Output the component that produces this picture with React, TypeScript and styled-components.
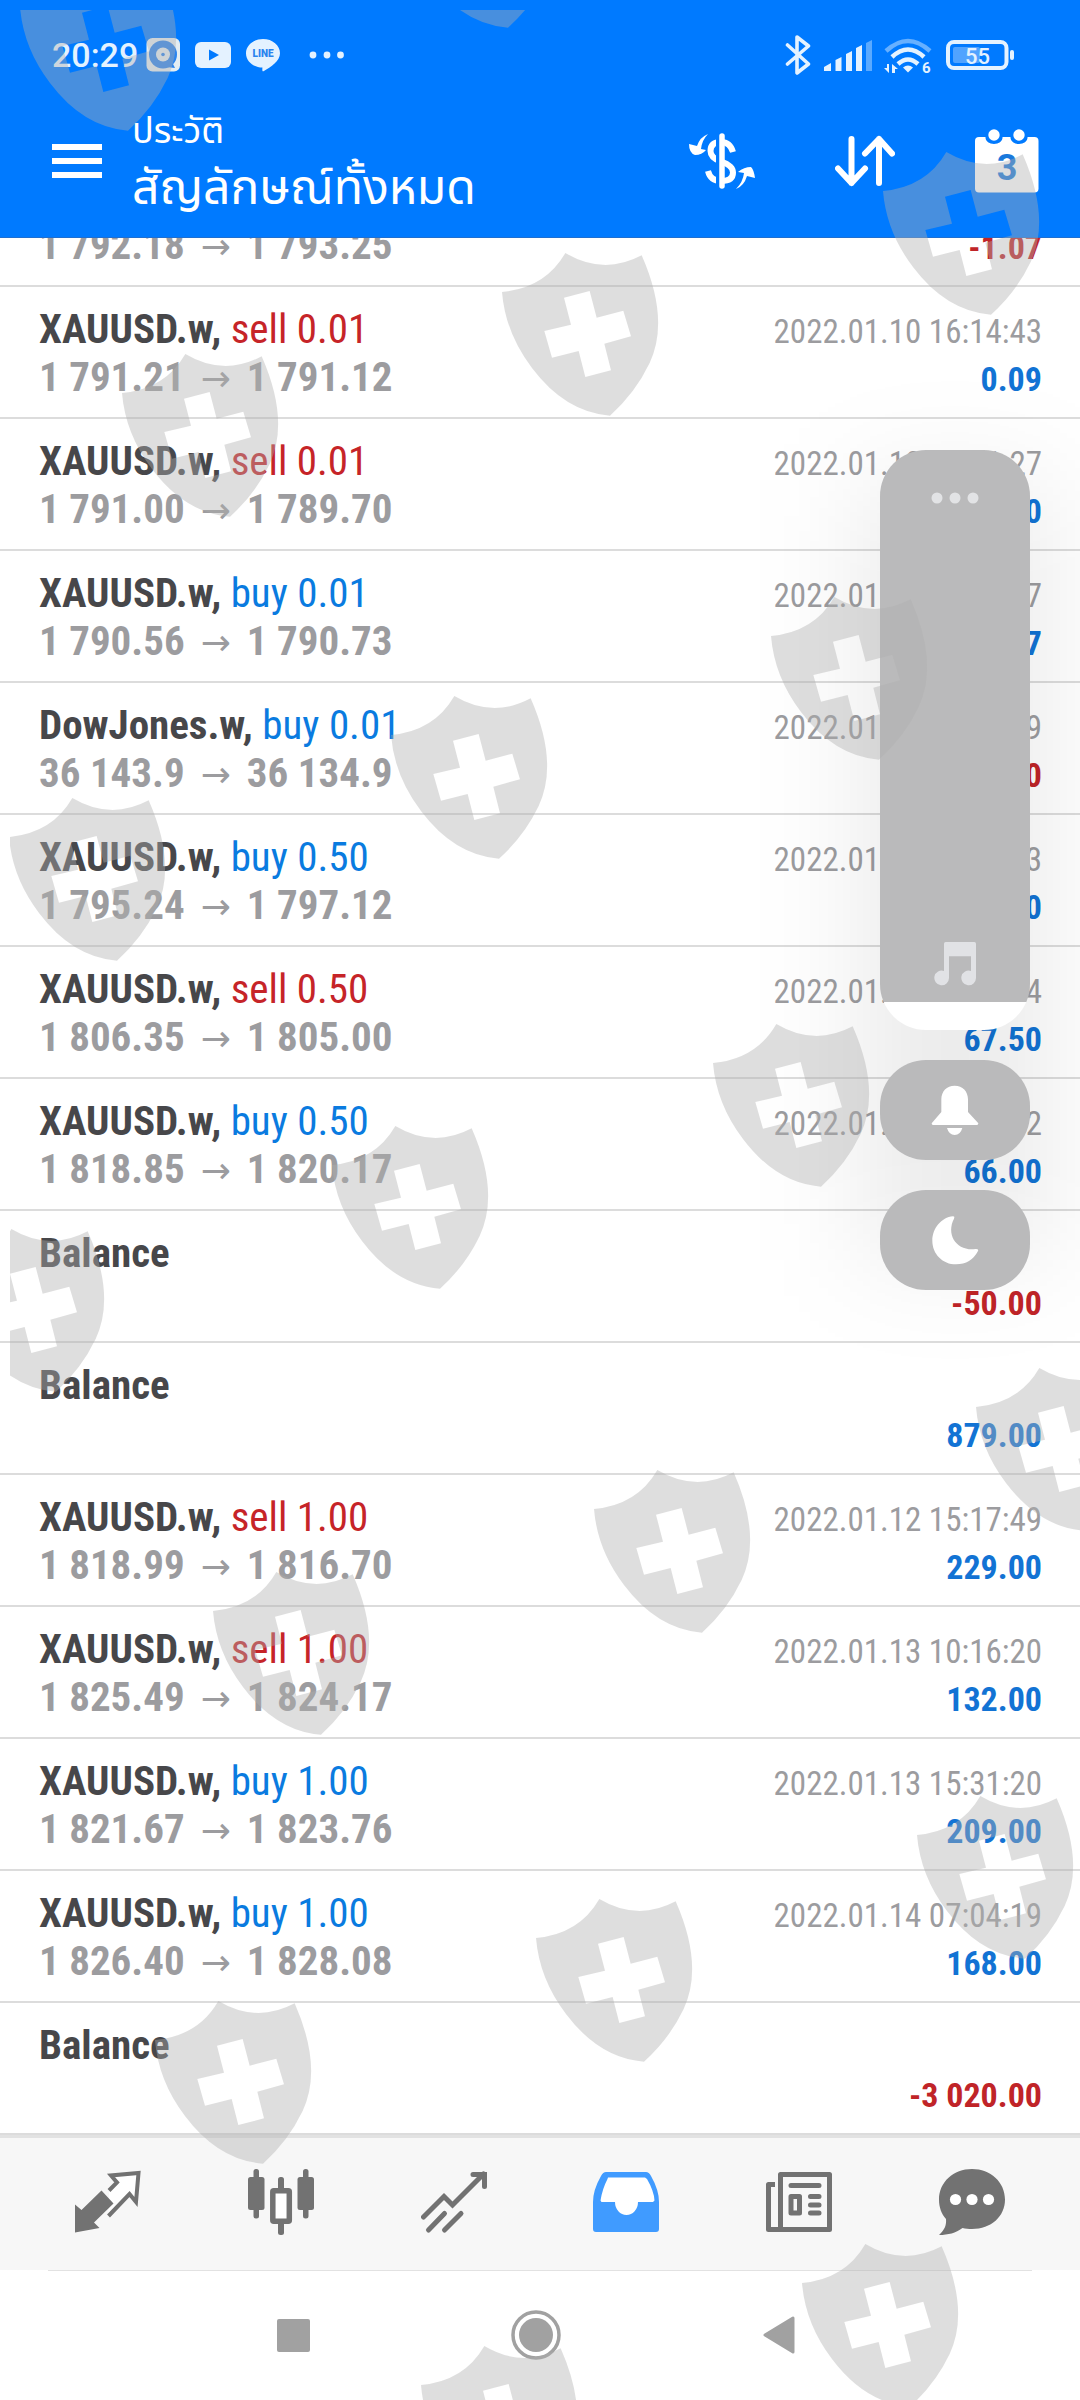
import React from "react";
import styled, { createGlobalStyle } from "styled-components";

const GlobalStyle = createGlobalStyle`
  * { box-sizing: border-box; }
  body { margin: 0; background: #fff; }
  button { border: 0; background: none; padding: 0; cursor: pointer; font: inherit; color: inherit; }
`;

const condensed = `"Roboto Condensed", Roboto, sans-serif`;

const Screen = styled.div`
  position: relative;
  display: flex;
  flex-direction: column;
  height: 100vh;
  overflow: hidden;
  background: #fff;
  font-family: ${condensed};
`;

const Header = styled.header`
  flex: none;
  background: #007aff;
  color: #fff;
  border-bottom: 1px solid #1f6fd0;
`;

const StatusBar = styled.div`
  display: flex;
  align-items: center;
  justify-content: space-between;
  height: 80px;
  padding: 30px 66px 0 52px;
`;

const StatusGroup = styled.div`
  display: flex;
  align-items: center;
  gap: 8px;
`;

const Clock = styled.time`
  font: 500 34px/40px Roboto, sans-serif;
  color: #e4f2ff;
`;

const Toolbar = styled.div`
  display: flex;
  align-items: center;
  height: 157px;
  padding: 4px 41px 0 52px;
`;

const Titles = styled.div`
  flex: 1;
  margin-left: 30px;
  font-family: "Noto Sans Thai", "Noto Sans", "Open Sans", sans-serif;
`;

const Caption = styled.div`
  font-size: 36px;
  line-height: 58px;
`;

const Heading = styled.h1`
  margin: 0;
  font-size: 48px;
  font-weight: 400;
  line-height: 58px;
`;

const Actions = styled.div`
  display: flex;
  align-items: center;
  gap: 80px;
`;

const IconButton = styled.button`
  display: flex;
  align-items: center;
  justify-content: center;
`;

const History = styled.ul`
  flex: 1;
  min-height: 0;
  margin: 0;
  padding: 0;
  list-style: none;
  overflow: hidden;
  display: flex;
  flex-direction: column;
  justify-content: flex-end;
`;

const Row = styled.li`
  flex: none;
  height: 132px;
  padding: 18px 38px 0 39px;
  border-bottom: 2px solid #dcdcdc;
`;

const Line = styled.div`
  display: flex;
  align-items: baseline;
  height: 48px;
  font-size: 41px;
  line-height: 48px;
  white-space: pre;
  &::before { content: "\\200b"; }
`;

const Symbol = styled.span`
  font-weight: 700;
  color: #47474a;
`;

const Side = styled.span<{ $kind: "buy" | "sell" }>`
  color: ${(p) => (p.$kind === "buy" ? "#0a7be0" : "#c62428")};
`;

const Prices = styled.span`
  font-weight: 700;
  color: #9c9c9f;
`;

const Arrow = styled.span`
  margin: 0 16px;
  font-family: "DejaVu Sans", sans-serif;
  font-size: 36px;
  font-weight: 400;
`;

const When = styled.time`
  margin-left: auto;
  font-size: 33px;
  color: #9c9c9f;
`;

const Profit = styled.span<{ $loss: boolean }>`
  margin-left: auto;
  font-size: 34px;
  font-weight: 700;
  color: ${(p) => (p.$loss ? "#c02428" : "#1273d4")};
`;

const TabBar = styled.nav`
  flex: none;
  display: flex;
  height: 135px;
  padding: 0 22px 4px;
  background: #f7f7f7;
  border-top: 3px solid #e2e2e2;
`;

const Tab = styled.button<{ $active?: boolean }>`
  flex: 1;
  display: flex;
  align-items: center;
  justify-content: center;
  color: ${(p) => (p.$active ? "#409bff" : "#727272")};
`;

const SystemNav = styled.nav`
  flex: none;
  display: flex;
  height: 130px;
  padding: 0 180px 0 172px;
  color: #a1a1a1;
  background: linear-gradient(#e2e2e2, #e2e2e2) 48px 0 / calc(100% - 96px) 1px no-repeat;
`;

const NavButton = styled.button`
  flex: 1;
  display: flex;
  align-items: center;
  justify-content: center;
`;

const VolumeOverlay = styled.aside`
  position: absolute;
  z-index: 0;
  top: 450px;
  right: 50px;
  width: 150px;
  display: flex;
  flex-direction: column;
  gap: 30px;
  &::before {
    content: "";
    position: absolute;
    z-index: -1;
    inset: 30px -20px;
    background: rgba(0, 0, 0, 0.08);
    filter: blur(55px);
  }
`;

const VolumePanel = styled.div`
  display: flex;
  flex-direction: column;
  align-items: center;
  justify-content: space-between;
  height: 580px;
  padding: 42px 0 44px;
  border-radius: 46px;
  background: linear-gradient(#bababb 552px, #fff 552px);
`;

const OverlayButton = styled.button`
  display: flex;
  align-items: center;
  justify-content: center;
  height: 100px;
  border-radius: 46px;
  background: #bababb;
`;

const Watermark = styled.svg`
  position: absolute;
  z-index: 1;
  top: 10px;
  left: 10px;
  pointer-events: none;
`;

type Trade = {
  symbol: string;
  side?: "buy" | "sell";
  lots?: string;
  open?: string;
  close?: string;
  time?: string;
  profit: string;
};

const gold = "XAUUSD.w";

const trades: Trade[] = [
  { symbol: gold, side: "sell", lots: "0.01", open: "1 792.18", close: "1 793.25", time: "2022.01.10 16:10:05", profit: "-1.07" },
  { symbol: gold, side: "sell", lots: "0.01", open: "1 791.21", close: "1 791.12", time: "2022.01.10 16:14:43", profit: "0.09" },
  { symbol: gold, side: "sell", lots: "0.01", open: "1 791.00", close: "1 789.70", time: "2022.01.10 16:21:27", profit: "1.30" },
  { symbol: gold, side: "buy", lots: "0.01", open: "1 790.56", close: "1 790.73", time: "2022.01.10 16:28:17", profit: "0.17" },
  { symbol: "DowJones.w", side: "buy", lots: "0.01", open: "36 143.9", close: "36 134.9", time: "2022.01.10 16:32:49", profit: "-0.90" },
  { symbol: gold, side: "buy", lots: "0.50", open: "1 795.24", close: "1 797.12", time: "2022.01.10 18:05:13", profit: "94.00" },
  { symbol: gold, side: "sell", lots: "0.50", open: "1 806.35", close: "1 805.00", time: "2022.01.11 15:20:24", profit: "67.50" },
  { symbol: gold, side: "buy", lots: "0.50", open: "1 818.85", close: "1 820.17", time: "2022.01.11 19:41:32", profit: "66.00" },
  { symbol: "Balance", profit: "-50.00" },
  { symbol: "Balance", profit: "879.00" },
  { symbol: gold, side: "sell", lots: "1.00", open: "1 818.99", close: "1 816.70", time: "2022.01.12 15:17:49", profit: "229.00" },
  { symbol: gold, side: "sell", lots: "1.00", open: "1 825.49", close: "1 824.17", time: "2022.01.13 10:16:20", profit: "132.00" },
  { symbol: gold, side: "buy", lots: "1.00", open: "1 821.67", close: "1 823.76", time: "2022.01.13 15:31:20", profit: "209.00" },
  { symbol: gold, side: "buy", lots: "1.00", open: "1 826.40", close: "1 828.08", time: "2022.01.14 07:04:19", profit: "168.00" },
  { symbol: "Balance", profit: "-3 020.00" },
];

function TradeRow({ trade }: { trade: Trade }) {
  return (
    <Row>
      <Line>
        <Symbol>{trade.side ? trade.symbol + ", " : trade.symbol}</Symbol>
        {trade.side && <Side $kind={trade.side}>{trade.side} {trade.lots}</Side>}
        {trade.time && <When>{trade.time}</When>}
      </Line>
      <Line>
        {trade.open && <Prices>{trade.open}<Arrow>→</Arrow>{trade.close}</Prices>}
        <Profit $loss={trade.profit.startsWith("-")}>{trade.profit}</Profit>
      </Line>
    </Row>
  );
}

const StatusIcons = () => (
  <svg width="198" height="34" viewBox="145 38 198 34" fill="#e4f2ff" aria-hidden="true">
    <rect x="145.500" y="38" width="33.500" height="33.500" rx="6" fill="#e4edf2" />
    <circle cx="162" cy="54.500" r="14" fill="#2b84ee" />
    <path d="M170 60l4 8-9-1z" fill="#2b84ee" />
    <circle cx="162" cy="54.500" r="7" fill="#e4edf2" />
    <circle cx="162" cy="54.500" r="1.800" fill="#2b84ee" />
    <rect x="194" y="42" width="36" height="26" rx="6" />
    <path d="M208 49.500l10 5.500-10 5.500z" fill="#007aff" />
    <path d="M262 39c9.500 0 17 6.300 17 14.200 0 7.500-9 13.800-16.500 18-1.200.5-1.300-.2-1.100-3.700-9.300-.3-16.400-6.300-16.400-14.300C245 45.300 252.500 39 262 39z" />
    <text x="262" y="57" textAnchor="middle" fontFamily="Roboto, sans-serif" fontWeight="900" fontSize="10" fill="#2b84ee">LINE</text>
    <circle cx="312" cy="55" r="3.400" /><circle cx="326" cy="55" r="3.400" /><circle cx="339.500" cy="55" r="3.400" />
  </svg>
);

const RadioIcons = () => (
  <svg width="229" height="40" viewBox="785 35 229 40" fill="#e4f2ff" aria-hidden="true">
    <path d="M787.500 45l21 19-11.500 9V37l11.500 9-21 18" fill="none" stroke="#e4f2ff" strokeWidth="3.600" strokeLinejoin="round" strokeLinecap="round" />
    <path d="M824 71v-4l7-4v8zM835.500 71V60l6-3v14zM846 71V54l6-3v20zM856 71V48l6-3v26z" />
    <path d="M866 71V43l6-3v31z" opacity=".4" />
    <g fill="none" stroke="#e4f2ff" strokeWidth="4.500">
      <path d="M886 51q22-20 44 0" opacity=".45" />
      <path d="M892 57q16-15 32 0M898 64q10-9 20 0" />
    </g>
    <path d="M903 67.500q5-4 10 0l-5 5z" />
    <path d="M889 64v9l-5-5h3v-4zM892 73v-9l6 5h-3v4z" />
    <text x="922" y="73" fontFamily="Roboto, sans-serif" fontWeight="700" fontSize="15">6</text>
    <rect x="948" y="42" width="58.500" height="26" rx="6" fill="none" stroke="#e4f2ff" strokeWidth="4" />
    <rect x="953" y="47" width="27" height="16" rx="2" opacity=".35" />
    <rect x="1010" y="50" width="4" height="10" rx="2" />
    <text x="977.500" y="63.500" textAnchor="middle" fontFamily="Roboto, sans-serif" fontWeight="500" fontSize="22">55</text>
  </svg>
);

const MenuIcon = () => (
  <svg width="50" height="34" viewBox="0 0 50 34" fill="#fff"><path d="M0 0h50v6H0zM0 14h50v6H0zM0 28h50v6H0z" /></svg>
);

const CurrencyIcon = () => (
  <svg width="66" height="58" viewBox="689 132 66 58" fill="none" stroke="#fff">
    <path d="M733 152q-3-10-12-10-10.500 0-10.500 9 0 7 10.500 10.500 12 4 12 11 0 8.500-12 8.500-10.500 0-13-10" strokeWidth="6" />
    <path d="M716 134h4v54h-4z" fill="#007aff" stroke="none" />
    <path d="M722 136v50" strokeWidth="5.500" strokeLinecap="round" />
    <path d="M708 134q-8 3-11 12l-8-2q0 9 6 11 7 0 11-5l-5-1q1-9 7-15zM736 189q8-3 11-13l8 2q-1-8-4-11-7 0-13 5l6 1q-1 9-8 16z" fill="#fff" stroke="none" />
  </svg>
);

const SortIcon = () => (
  <svg width="60" height="52" viewBox="835 135 60 52" fill="none" stroke="#fff" strokeWidth="6" strokeLinecap="round" strokeLinejoin="round">
    <path d="M851.500 139v44M838 168.500l13.500 14.500 13.500-14.500M879 183v-44M865 153.500l14-14.500 13 14.500" />
  </svg>
);

const CalendarIcon = () => (
  <svg width="64" height="64" viewBox="975 128 64 64">
    <rect x="975" y="136" width="63.500" height="55.500" rx="4" fill="#fff" />
    <path d="M985.500 135v2a8.500 6 0 0 0 17 0v-2zM1010.500 135v2a8.500 6 0 0 0 17 0v-2z" fill="#007aff" />
    <circle cx="994" cy="134" r="5.700" fill="#fff" /><circle cx="1019" cy="134" r="5.700" fill="#fff" />
    <text x="1007" y="179" textAnchor="middle" fontFamily="Roboto, sans-serif" fontWeight="700" fontSize="36" fill="#1979dc">3</text>
  </svg>
);

const TradeIcon = () => (
  <svg width="66" height="66" viewBox="75 2169 66 66" fill="currentColor">
    <path d="M109 2190.500l8-8-6-7 27.500-2.500-2.500 29-6.500-8-21 22" fill="#fff" stroke="currentColor" strokeWidth="4" />
    <path d="M75 2204.500l6.500 5.500 20-19.500 12 13-19.500 19 5.500 5.500-24.500 4.500z" />
  </svg>
);

const ChartIcon = () => (
  <svg width="66" height="66" viewBox="247 2169 66 66" fill="currentColor">
    <rect x="247" y="2177" width="16.500" height="33" rx="2.500" /><rect x="252.500" y="2169" width="5.500" height="49.500" rx="2.500" />
    <rect x="296.500" y="2177" width="16.500" height="33" rx="2.500" /><rect x="302" y="2169" width="5.500" height="49.500" rx="2.500" />
    <rect x="277" y="2177" width="6" height="14" rx="2.500" /><rect x="277" y="2220" width="6" height="15" rx="2.500" />
    <rect x="271.800" y="2190.800" width="16.500" height="30.500" rx="1" fill="#fff" stroke="currentColor" strokeWidth="5.500" />
  </svg>
);

const TrendIcon = () => (
  <svg width="66" height="66" viewBox="419 2169 66 66" fill="none" stroke="currentColor" strokeWidth="5">
    <path d="M421.500 2217l20.500-20.500 8.500 8.500 31-31" strokeLinecap="round" /><path d="M471 2174.500h11.500v12" strokeLinecap="round" />
    <path d="M426.500 2230l16-16.500M442.500 2230l16.500-16.500" strokeLinecap="round" />
  </svg>
);

const InboxIcon = () => (
  <svg width="66" height="66" viewBox="592 2169 66 66">
    <path d="M605 2172h40q3 0 5 4 8 14 8 26v27q0 3-3 3h-60q-3 0-3-3v-27q0-12 8-26 2-4 5-4z" fill="currentColor" />
    <path d="M607 2177.500h37l2 1.500q7 12 7.500 21.500l-1.500 1.500h-15a11.500 13 0 0 1-23 0h-13.500l-1-1.500q2-12 7-21.500z" fill="#fff" />
  </svg>
);

const NewsIcon = () => (
  <svg width="66" height="66" viewBox="765 2169 66 66" fill="none" stroke="currentColor" strokeWidth="5">
    <path d="M779.500 2174.500h49v55h-49zM774 2184.500h-6.500v45h12" strokeLinejoin="round" />
    <path d="M790 2185.500h28M809.500 2196.500h8.500M809.500 2205h8.500M809.500 2213h8.500" strokeLinecap="round" />
    <rect x="790" y="2196.500" width="8.500" height="16.500" strokeLinejoin="round" />
  </svg>
);

const ChatIcon = () => (
  <svg width="66" height="66" viewBox="938 2169 66 66">
    <path d="M971 2169c18.500 0 33 13 33 30.500 0 17-14 29.500-33 29.500-3.500 0-6.500-.4-9.500-1-7 5-14 7-23.500 7 6-5.500 7.500-10 7-16-4.500-5-7-11.500-7-19.500 0-17.500 14.500-30.500 33-30.500z" fill="currentColor" />
    <g fill="#fff"><circle cx="954.500" cy="2199.500" r="5.600" /><circle cx="971" cy="2199.500" r="5.600" /><circle cx="987.500" cy="2199.500" r="5.600" /></g>
  </svg>
);

const tabs = [
  { label: "Quotes", Icon: TradeIcon },
  { label: "Charts", Icon: ChartIcon },
  { label: "Trade", Icon: TrendIcon },
  { label: "History", Icon: InboxIcon },
  { label: "News", Icon: NewsIcon },
  { label: "Messages", Icon: ChatIcon },
];

const shields = [
  [400, -135], [20, -32], [883, 152], [502, 253], [122, 354], [771, 597], [391, 696], [9, 798],
  [713, 1024], [332, 1126], [-52, 1229], [976, 1368], [594, 1470], [213, 1572], [917, 1796],
  [536, 1899], [155, 2001], [802, 2244], [421, 2346],
];

const shieldPath =
  "M190 0Q305 68 419 7Q504 200 443 330Q400 420 324 488Q190 478 90 345Q10 240 0 117Q130 105 190 0Z" +
  "M186 134L263 114L284 194L364 173L387 250L307 272L327 352L250 372L230 294L150 314L127 234L207 215Z";

function Watermarks() {
  return (
    <Watermark width="1070" height="2390" viewBox="10 10 1070 2390" aria-hidden="true">
      {shields.map(([x, y]) => (
        <path key={`${x},${y}`} d={shieldPath} transform={`translate(${x} ${y}) scale(0.3333)`} fill="#b0b0b0" fillOpacity="0.41" fillRule="evenodd" />
      ))}
    </Watermark>
  );
}

export default function App() {
  return (
    <Screen>
      <GlobalStyle />
      <Header>
        <StatusBar>
          <StatusGroup><Clock>20:29</Clock><StatusIcons /></StatusGroup>
          <StatusGroup><RadioIcons /></StatusGroup>
        </StatusBar>
        <Toolbar>
          <IconButton aria-label="Menu"><MenuIcon /></IconButton>
          <Titles>
            <Caption>ประวัติ</Caption>
            <Heading>สัญลักษณ์ทั้งหมด</Heading>
          </Titles>
          <Actions>
            <IconButton aria-label="Currency"><CurrencyIcon /></IconButton>
            <IconButton aria-label="Sort"><SortIcon /></IconButton>
            <IconButton aria-label="Period"><CalendarIcon /></IconButton>
          </Actions>
        </Toolbar>
      </Header>
      <History>
        {trades.map((t, i) => <TradeRow key={i} trade={t} />)}
      </History>
      <TabBar>
        {tabs.map(({ label, Icon }) => (
          <Tab key={label} aria-label={label} $active={label === "History"}><Icon /></Tab>
        ))}
      </TabBar>
      <SystemNav>
        <NavButton aria-label="Recent apps">
          <svg width="33" height="33" viewBox="0 0 33 33"><rect width="33" height="33" rx="2" fill="currentColor" /></svg>
        </NavButton>
        <NavButton aria-label="Home">
          <svg width="50" height="50" viewBox="0 0 50 50"><circle cx="25" cy="25" r="23" fill="#fff" stroke="currentColor" strokeWidth="3.500" /><circle cx="25" cy="25" r="17" fill="currentColor" /></svg>
        </NavButton>
        <NavButton aria-label="Back">
          <svg width="32" height="38" viewBox="0 0 32 38"><path d="M2 19L30 2v34z" fill="currentColor" stroke="currentColor" strokeWidth="3" strokeLinejoin="round" /></svg>
        </NavButton>
      </SystemNav>
      <VolumeOverlay aria-label="Volume">
        <VolumePanel>
          <IconButton aria-label="More">
            <svg width="48" height="12" viewBox="0 0 48 12" fill="#e2e3e5"><circle cx="6" cy="6" r="5.500" /><circle cx="24" cy="6" r="5.500" /><circle cx="42" cy="6" r="5.500" /></svg>
          </IconButton>
          <svg width="44" height="44" viewBox="513 128 132 132" fill="#e1e2e5"><path d="M551 128h86q5 0 5 5V236a22 22 0 1 1-15-21v-44h-66v65a22 22 0 1 1-15-21v-82q0-5 5-5z" /></svg>
        </VolumePanel>
        <OverlayButton aria-label="Ring">
          <svg width="48" height="50" viewBox="512 552 144 150" fill="#fff"><path d="M583 554c24 0 40 17 40 41v38l31 34q0 5-4 5H518q-4 0-4-5l29-34v-38c0-24 16-41 40-41zM560 681h46q-6 21-23 21t-23-21z" /></svg>
        </OverlayButton>
        <OverlayButton aria-label="Do not disturb">
          <svg width="48" height="50" viewBox="512 944 144 150" fill="#fff"><path d="M578 948q6 0 3 7c-25 48 8 98 64 91q11-1 8 6-21 40-66 40c-40 0-71-31-71-71 0-36 27-70 62-73z" /></svg>
        </OverlayButton>
      </VolumeOverlay>
      <Watermarks />
    </Screen>
  );
}
